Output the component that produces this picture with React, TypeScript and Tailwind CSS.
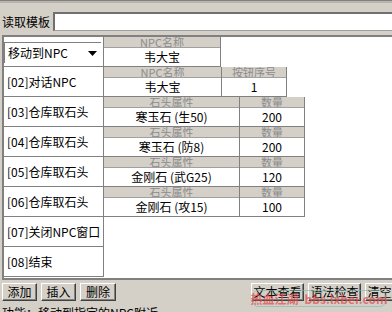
import React from 'react';

type Cell = { label: string; value: string; width: number };

interface Step {
  name: string;
  cells: Cell[];
}

const steps: Step[] = [
  { name: '', cells: [{ label: 'NPC名称', value: '韦大宝', width: 117 }] },
  {
    name: '[02]对话NPC',
    cells: [
      { label: 'NPC名称', value: '韦大宝', width: 118 },
      { label: '按钮序号', value: '1', width: 65 },
    ],
  },
  {
    name: '[03]仓库取石头',
    cells: [
      { label: '石头属性', value: '寒玉石 (生50)', width: 136 },
      { label: '数量', value: '200', width: 65 },
    ],
  },
  {
    name: '[04]仓库取石头',
    cells: [
      { label: '石头属性', value: '寒玉石 (防8)', width: 136 },
      { label: '数量', value: '200', width: 65 },
    ],
  },
  {
    name: '[05]仓库取石头',
    cells: [
      { label: '石头属性', value: '金刚石 (武G25)', width: 136 },
      { label: '数量', value: '120', width: 65 },
    ],
  },
  {
    name: '[06]仓库取石头',
    cells: [
      { label: '石头属性', value: '金刚石 (攻15)', width: 136 },
      { label: '数量', value: '100', width: 65 },
    ],
  },
  { name: '[07]关闭NPC窗口', cells: [] },
  { name: '[08]结束', cells: [] },
];

function Btn({ children, w }: { children: React.ReactNode; w: string }) {
  return (
    <button
      className={`${w} h-[18px] flex-shrink-0 flex items-center justify-center whitespace-nowrap bg-[#d4d0c8] border border-t-white border-l-white border-r-[#404040] border-b-[#404040] shadow-[inset_-1px_-1px_#808080] text-[12px] leading-none text-black`}
    >
      {children}
    </button>
  );
}

function ParamCell({ cell }: { cell: Cell }) {
  return (
    <div className="flex flex-col border-r border-b border-[#808080]" style={{ width: cell.width }}>
      <div className="h-[11px] bg-[#d4d0c8] overflow-hidden flex items-center justify-center text-[11px] leading-[11px] text-[#8c8c8c] border-b border-[#a0a0a0]">
        {cell.label}
      </div>
      <div className="flex-1 bg-white flex items-center justify-center text-[12px] text-black whitespace-nowrap">
        {cell.value}
      </div>
    </div>
  );
}

export default function App() {
  return (
    <div className="w-[392px] h-[312px] bg-[#d4d0c8] overflow-hidden relative font-['Noto_Sans_CJK_SC',sans-serif] text-[12px] text-black">
      <div className="h-[1px] bg-[#808080]" />
      <div className="h-[2px] bg-[#b8b4ac]" />

      <div className="flex items-center h-[19px] mt-[9px]">
        <span className="pl-[2px] w-[53px] text-[12px] leading-none whitespace-nowrap">读取模板</span>
        <div className="flex-1 h-[19px] bg-white border-t-2 border-l-2 border-t-[#707070] border-l-[#707070] border-b border-b-[#a0a0a0]" />
      </div>

      <div className="mt-[4px] ml-[2px] h-[245px] bg-white border-t-2 border-l-2 border-b-2 border-[#808080] flex flex-col">
        {steps.map((s, i) => (
          <div key={i} className="flex h-[30px] flex-shrink-0">
            <div className="w-[100px] flex-shrink-0 border-r border-b border-[#808080] flex items-center">
              {i === 0 ? (
                <div className="mt-[2px] w-[97px] h-[21px] border-l border-t border-[#808080] flex items-center justify-between pl-[3px] pr-[4px] bg-white">
                  <span>移动到NPC</span>
                  <svg width="9" height="5" viewBox="0 0 9 5">
                    <polygon points="0,0 9,0 4.5,5" fill="#000" />
                  </svg>
                </div>
              ) : (
                <span className="pl-[3px] text-[12px] whitespace-nowrap">{s.name}</span>
              )}
            </div>
            <div className="flex">
              {s.cells.map((c, j) => (
                <ParamCell key={j} cell={c} />
              ))}
            </div>
          </div>
        ))}
      </div>

      <div className="flex items-center h-[19px] mt-[2px] pl-[2px] gap-[4px] w-[420px]">
        <Btn w="w-[35px]">添加</Btn>
        <Btn w="w-[35px]">插入</Btn>
        <Btn w="w-[36px]">删除</Btn>
        <div className="w-[127px] flex-shrink-0" />
        <Btn w="w-[53px]">文本查看</Btn>
        <Btn w="w-[53px]">语法检查</Btn>
        <Btn w="w-[53px]">清空脚本</Btn>
      </div>

      <div className="pl-[2px] mt-[5px] text-[12px] leading-[14px] whitespace-nowrap">功能：移动到指定的NPC附近</div>

      <div className="absolute left-[252px] top-[290px] w-[134px] h-[17px] rounded-[6px] border border-[#7fb8b0]/60 flex items-center justify-center gap-[6px] text-[12px] font-bold text-[#e04848]/70 leading-none whitespace-nowrap">
        <span>热血江湖</span>
        <span>bbs.lxbei.com</span>
      </div>
    </div>
  );
}
